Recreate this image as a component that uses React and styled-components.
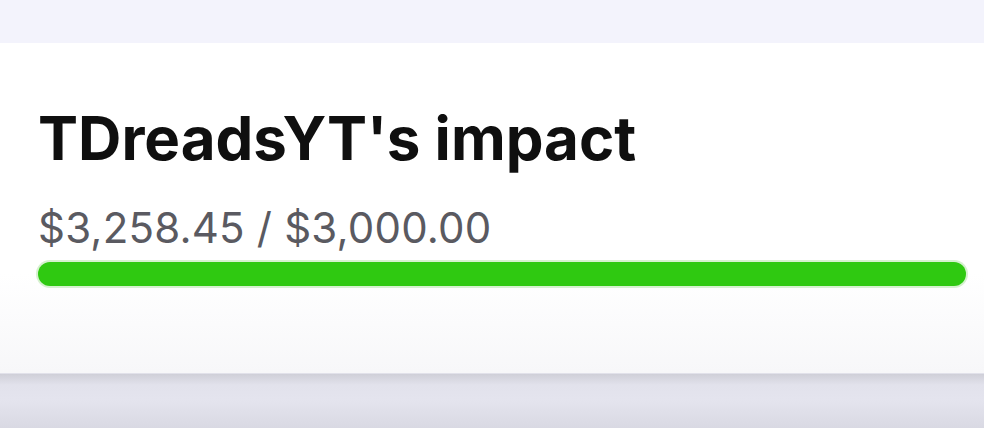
import React from "react";
import styled, { createGlobalStyle } from "styled-components";

const Global = createGlobalStyle`
  html, body { margin: 0; padding: 0; }
  body {
    background: #f3f3fc;
    font-family: Inter, "Noto Sans", sans-serif;
    width: 984px;
    height: 428px;
    overflow: hidden;
  }
`;

const Page = styled.div`
  height: 428px;
  display: flex;
  flex-direction: column;
  padding-top: 43px;
  box-sizing: border-box;
  background: linear-gradient(
    to bottom,
    #f3f3fc 0px,
    #f3f3fc 373px,
    #cfcfd8 374px,
    #e2e2ec 385px,
    #e4e4ee 400px,
    #d9d9e3 428px
  );
`;

const Card = styled.section`
  height: 330px;
  background: linear-gradient(to bottom, #ffffff 0%, #ffffff 70%, #f7f7f9 100%);
  box-sizing: border-box;
  padding: 65px 16px 0 38px;
  display: flex;
  flex-direction: column;
`;

const Title = styled.h1`
  margin: 0;
  font-size: 60px;
  font-weight: 700;
  line-height: 1;
  color: #0f0f0f;
`;

const Amount = styled.div`
  margin-top: 39px;
  font-size: 42px;
  font-weight: 400;
  line-height: 1;
  letter-spacing: 0.2px;
  color: #5a5a61;
`;

const Track = styled.div`
  margin-top: 11px;
  margin-left: -2px;
  height: 28px;
  border-radius: 14px;
  background: #d6f1cf;
  padding: 2px;
  box-sizing: border-box;
`;

const Fill = styled.div`
  height: 100%;
  border-radius: 12px;
  background: #2fc911;
`;

export default function App() {
  const pct = Math.min(100, (3258.45 / 3000) * 100);
  return (
    <>
      <Global />
      <Page>
        <Card>
          <Title>TDreadsYT's impact</Title>
          <Amount>$3,258.45 / $3,000.00</Amount>
          <Track>
            <Fill style={{ width: `${pct}%` }} />
          </Track>
        </Card>
      </Page>
    </>
  );
}
